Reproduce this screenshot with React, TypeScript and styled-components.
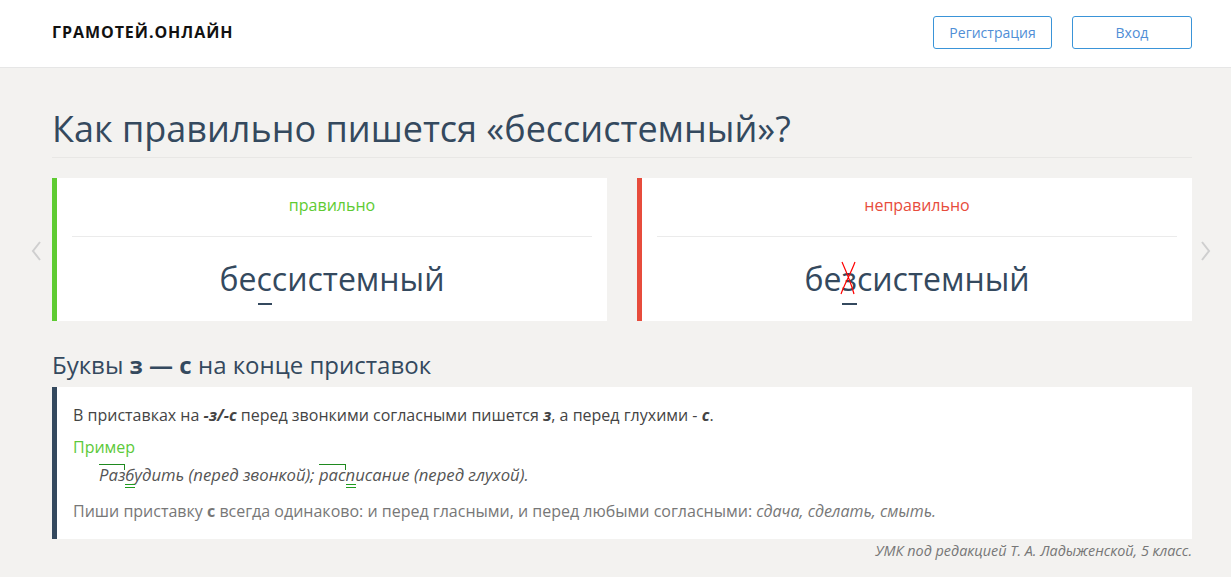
import React from 'react'
import styled, { createGlobalStyle } from 'styled-components'

const GlobalStyle = createGlobalStyle`
    body {
        margin: 0;
        background: #f3f2f0;
        font-family: 'Open Sans', 'Noto Sans', sans-serif;
        color: #34495e;
    }
`

const Header = styled.header`
    height: 68px;
    background: #fff;
    border-bottom: 1px solid #e6e6e6;
    box-sizing: border-box;
`

const Inner = styled.div`
    width: 1140px;
    margin-left: 52px;
`

const HeaderInner = styled(Inner)`
    height: 100%;
    display: flex;
    align-items: center;
    justify-content: space-between;
`

const Logo = styled.div`
    font-size: 16px;
    font-weight: 700;
    letter-spacing: 0.95px;
    color: #111;
    margin-top: -3px;
`

const Actions = styled.div`
    display: flex;
    gap: 20px;
    margin-top: -3px;
`

const OutlineButton = styled.button<{ $width: number }>`
    width: ${({ $width }) => $width}px;
    height: 33px;
    border: 1px solid #3a94d8;
    border-radius: 3px;
    background: #fff;
    color: #4f8ed6;
    font-family: inherit;
    font-size: 14px;
    cursor: pointer;
`

const Title = styled.h1`
    margin: 37px 0 0;
    padding-bottom: 4px;
    font-size: 36px;
    font-weight: 400;
    line-height: 48px;
    color: #34495e;
    border-bottom: 1px solid #e8e7e5;
`

const Slider = styled.div`
    position: relative;
    display: grid;
    grid-template-columns: 1fr 1fr;
    gap: 30px;
    margin-top: 20px;
`

const Arrow = styled.div<{ $side: 'left' | 'right' }>`
    position: absolute;
    top: 63px;
    ${({ $side }) => ($side === 'left' ? 'left: -22px;' : 'right: -20px;')}
    width: 14px;
    height: 20px;
    color: #cfcfcf;
`

const Card = styled.div<{ $accent: string }>`
    background: #fff;
    border-left: 5px solid ${({ $accent }) => $accent};
    height: 143px;
    padding: 0 15px;
    box-sizing: border-box;
`

const CardLabel = styled.div<{ $color: string }>`
    color: ${({ $color }) => $color};
    font-size: 16px;
    text-align: center;
    height: 58px;
    line-height: 55px;
    border-bottom: 1px solid #ebebeb;
`

const Word = styled.div`
    text-align: center;
    font-size: 32px;
    line-height: 40px;
    margin-top: 22px;
    color: #34495e;
`

const Marked = styled.span`
    position: relative;
    &::after {
        content: '';
        position: absolute;
        left: 1px;
        right: 0;
        bottom: -5px;
        height: 2px;
        background: #34495e;
    }
`

const Cross = styled.svg`
    position: absolute;
    left: -1px;
    top: 4px;
    width: 16px;
    height: 34px;
`

const SectionTitle = styled.h2`
    margin: 28px 0 0;
    font-size: 24px;
    font-weight: 400;
    line-height: 32px;
    color: #34495e;

    b {
        font-weight: 700;
    }
`

const Rule = styled.div`
    margin-top: 6px;
    background: #fff;
    border-left: 5px solid #34495e;
    padding: 17px 16px 17px;
    font-size: 16px;
    color: #444;
`

const RuleText = styled.p<{ $muted?: boolean }>`
    margin: 0;
    line-height: 22px;
    color: ${({ $muted }) => ($muted ? '#777' : '#444')};
`

const ExampleLabel = styled.div`
    color: #5cc93a;
    font-size: 16px;
    margin-top: 10px;
    line-height: 22px;
`

const ExampleLine = styled.div`
    font-style: italic;
    font-size: 16.7px;
    color: #555;
    padding-left: 26px;
    margin-top: 6px;
    margin-bottom: 14px;
    line-height: 22px;
`

const Prefix = styled.span`
    position: relative;
    &::before {
        content: '';
        position: absolute;
        left: 0;
        right: 0;
        top: 1px;
        height: 5px;
        border-top: 1px solid #1f8a1f;
        border-right: 1px solid #1f8a1f;
    }
`

const Voiced = styled.span`
    position: relative;
    &::after {
        content: '';
        position: absolute;
        left: 0;
        width: 10px;
        bottom: -2px;
        height: 2px;
        border-top: 1px solid #1f9a1f;
        border-bottom: 1px solid #1f9a1f;
    }
`

const Source = styled.div`
    text-align: right;
    font-size: 14.4px;
    font-style: italic;
    color: #777;
    margin-top: 2px;
`

const Chevron = ({ dir }: { dir: 'left' | 'right' }) => (
    <svg viewBox="0 0 14 20" width="14" height="20" fill="none" stroke="currentColor" strokeWidth="2">
        {dir === 'left' ? <path d="M10 1 L3 10 L10 19" /> : <path d="M4 1 L11 10 L4 19" />}
    </svg>
)

const App = (): JSX.Element => {
    return (
        <>
            <GlobalStyle />
            <Header>
                <HeaderInner>
                    <Logo>ГРАМОТЕЙ.ОНЛАЙН</Logo>
                    <Actions>
                        <OutlineButton $width={119}>Регистрация</OutlineButton>
                        <OutlineButton $width={120}>Вход</OutlineButton>
                    </Actions>
                </HeaderInner>
            </Header>
            <Inner>
                <Title>Как правильно пишется «бессистемный»?</Title>
                <Slider>
                    <Arrow $side="left">
                        <Chevron dir="left" />
                    </Arrow>
                    <Card $accent="#5ecb32">
                        <CardLabel $color="#5ecb32">правильно</CardLabel>
                        <Word>
                            бе<Marked>с</Marked>системный
                        </Word>
                    </Card>
                    <Card $accent="#e74c3c">
                        <CardLabel $color="#e74c3c">неправильно</CardLabel>
                        <Word>
                            бе
                            <Marked>
                                з
                                <Cross viewBox="0 0 16 34">
                                    <path d="M2 1 C6 10 11 22 14 33 M15 1 C11 12 5 22 1 33" stroke="#f00" strokeWidth="1.2" fill="none" />
                                </Cross>
                            </Marked>
                            системный
                        </Word>
                    </Card>
                    <Arrow $side="right">
                        <Chevron dir="right" />
                    </Arrow>
                </Slider>
                <SectionTitle>
                    Буквы <b>з — с</b> на конце приставок
                </SectionTitle>
                <Rule>
                    <RuleText>
                        В приставках на <b><i>-з/-с</i></b> перед звонкими согласными пишется <b><i>з</i></b>, а перед глухими - <b><i>с</i></b>.
                    </RuleText>
                    <ExampleLabel>Пример</ExampleLabel>
                    <ExampleLine>
                        <Prefix>Раз</Prefix>
                        <Voiced>б</Voiced>удить (перед звонкой); <Prefix>рас</Prefix>
                        <Voiced>п</Voiced>исание (перед глухой).
                    </ExampleLine>
                    <RuleText $muted>
                        Пиши приставку <b>с</b> всегда одинаково: и перед гласными, и перед любыми согласными: <i>сдача, сделать, смыть.</i>
                    </RuleText>
                </Rule>
                <Source>УМК под редакцией Т. А. Ладыженской, 5 класс.</Source>
            </Inner>
        </>
    )
}

export default App
